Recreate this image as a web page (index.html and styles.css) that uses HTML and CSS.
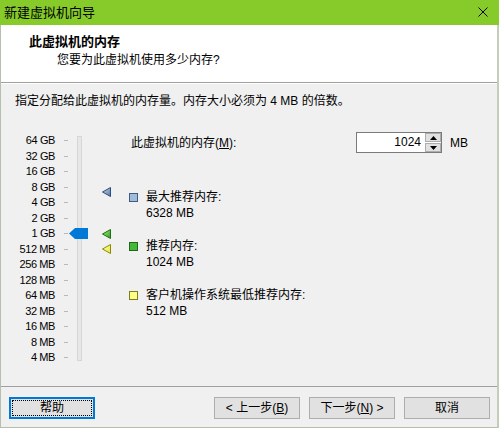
FILE: index.html
```html
<!DOCTYPE html>
<html lang="zh-CN">
<head>
<meta charset="utf-8">
<link rel="stylesheet" href="styles.css">
</head>
<body>
<div class="window">
  <div class="titlebar">
    <span class="title">新建虚拟机向导</span>
    <svg class="close" width="10" height="10" viewBox="0 0 10 10"><path d="M0.5 0.5 L9.5 9.5 M9.5 0.5 L0.5 9.5" stroke="#000" stroke-width="1" fill="none"/></svg>
  </div>
  <div class="frame">
    <div class="header">
      <div class="h-title">此虚拟机的内存</div>
      <div class="h-sub">您要为此虚拟机使用多少内存?</div>
    </div>
    <div class="content">
      <div class="intro">指定分配给此虚拟机的内存量。内存大小必须为 4 MB 的倍数。</div>
      <div class="main">
        <div class="slider">
          <div class="track"></div>
          <div class="lbl"><span>64 GB</span><i></i></div>
          <div class="lbl"><span>32 GB</span><i></i></div>
          <div class="lbl"><span>16 GB</span><i></i></div>
          <div class="lbl"><span>8 GB</span><i></i></div>
          <div class="lbl"><span>4 GB</span><i></i></div>
          <div class="lbl"><span>2 GB</span><i></i></div>
          <div class="lbl"><span>1 GB</span><i></i></div>
          <div class="lbl"><span>512 MB</span><i></i></div>
          <div class="lbl"><span>256 MB</span><i></i></div>
          <div class="lbl"><span>128 MB</span><i></i></div>
          <div class="lbl"><span>64 MB</span><i></i></div>
          <div class="lbl"><span>32 MB</span><i></i></div>
          <div class="lbl"><span>16 MB</span><i></i></div>
          <div class="lbl"><span>8 MB</span><i></i></div>
          <div class="lbl"><span>4 MB</span><i></i></div>
          <svg class="thumb" width="19" height="11" viewBox="0 0 19 11"><polygon points="0,5.5 6,0 19,0 19,11 6,11" fill="#0078d7"/></svg>
          <svg class="mark mark-blue" width="10" height="10" viewBox="0 0 10 10">
            <defs><linearGradient id="gb" x1="0" y1="0" x2="1" y2="1"><stop offset="0" stop-color="#c9d8ee"/><stop offset="1" stop-color="#5577a8"/></linearGradient></defs>
            <polygon points="0.5,5 8.5,0.5 8.5,9.5" fill="url(#gb)" stroke="#2d4c78" stroke-width="1" stroke-linejoin="round"/>
          </svg>
          <svg class="mark mark-green" width="10" height="10" viewBox="0 0 10 10">
            <defs><linearGradient id="gg" x1="0" y1="0" x2="1" y2="1"><stop offset="0" stop-color="#a8f08a"/><stop offset="1" stop-color="#2f9a1c"/></linearGradient></defs>
            <polygon points="0.5,5 8.5,0.5 8.5,9.5" fill="url(#gg)" stroke="#1e6e10" stroke-width="1" stroke-linejoin="round"/>
          </svg>
          <svg class="mark mark-yellow" width="10" height="10" viewBox="0 0 10 10">
            <defs><linearGradient id="gy" x1="0" y1="0" x2="1" y2="1"><stop offset="0" stop-color="#ffffc0"/><stop offset="1" stop-color="#e8e830"/></linearGradient></defs>
            <polygon points="0.5,5 8.5,0.5 8.5,9.5" fill="url(#gy)" stroke="#8a8a00" stroke-width="1" stroke-linejoin="round"/>
          </svg>
        </div>
        <div class="right">
          <div class="mem-row">
            <span class="mem-label">此虚拟机的内存(<u>M</u>):</span>
            <div class="spin-input">
              <div class="field">1024</div>
              <div class="spin">
                <div class="spin-btn"><svg width="7" height="4" viewBox="0 0 7 4"><polygon points="3.5,0 7,4 0,4" fill="#000"/></svg></div>
                <div class="spin-btn"><svg width="7" height="4" viewBox="0 0 7 4"><polygon points="0,0 7,0 3.5,4" fill="#000"/></svg></div>
              </div>
            </div>
            <span class="unit">MB</span>
          </div>
          <div class="legend first">
            <span class="sq sq-blue"></span>
            <div class="leg-text"><div>最大推荐内存:</div><div>6328 MB</div></div>
          </div>
          <div class="legend">
            <span class="sq sq-green"></span>
            <div class="leg-text"><div>推荐内存:</div><div>1024 MB</div></div>
          </div>
          <div class="legend">
            <span class="sq sq-yellow"></span>
            <div class="leg-text"><div>客户机操作系统最低推荐内存:</div><div>512 MB</div></div>
          </div>
        </div>
      </div>
    </div>
    <div class="footer">
      <button class="btn btn-default"><span class="focus">帮助</span></button>
      <div class="spacer"></div>
      <button class="btn">&lt; 上一步(<u>B</u>)</button>
      <button class="btn">下一步(<u>N</u>) &gt;</button>
      <button class="btn">取消</button>
    </div>
  </div>
</div>
</body>
</html>
```
FILE: styles.css
```css
* { box-sizing: border-box; }
html, body { margin: 0; padding: 0; }
body {
  width: 499px;
  height: 428px;
  overflow: hidden;
  font-family: "Liberation Sans", "Noto Sans CJK SC", sans-serif;
  font-size: 12px;
  color: #000;
  background: #f0f0f0;
}
.window {
  width: 499px;
  height: 428px;
  display: flex;
  flex-direction: column;
}
.titlebar {
  height: 25px;
  flex: none;
  background: #86cb2a;
  display: flex;
  align-items: center;
  padding: 0 11px 0 4px;
}
.title {
  font-size: 13px;
  line-height: 16px;
  flex: 1;
}
.close { display: block; margin-top: -1px; }
.frame {
  flex: 1;
  display: flex;
  flex-direction: column;
  border: 1px solid #b6bfab;
  border-top: none;
  border-right: 2px solid #c4ccba;
}
.header {
  height: 58px;
  flex: none;
  background: #fff;
  padding: 9px 0 0 28px;
  border-bottom: 1px solid #a0a0a0;
}
.h-title {
  font-size: 13px;
  font-weight: bold;
  line-height: 16px;
}
.h-sub {
  margin-top: 2px;
  padding-left: 28px;
  line-height: 16px;
}
.content {
  flex: 1;
  border-top: 1px solid #fff;
  padding-top: 9px;
}
.intro {
  padding-left: 14px;
  line-height: 16px;
}
.main {
  display: flex;
  align-items: flex-start;
  margin-top: 24px;
}
.slider {
  position: relative;
  width: 130px;
  flex: none;
}
.lbl {
  display: flex;
  align-items: center;
  height: 15.5px;
}
.lbl span {
  width: 54px;
  text-align: right;
  font-size: 11px;
  letter-spacing: -0.4px;
  line-height: 15.5px;
  white-space: nowrap;
}
.lbl i {
  display: block;
  width: 4px;
  height: 1px;
  margin-left: 9px;
  background: #b8b8b8;
}
.track {
  position: absolute;
  left: 76px;
  top: 3px;
  width: 5px;
  height: 225px;
  background: #e7e7e7;
  border: 1px solid #d6d6d6;
}
.thumb {
  position: absolute;
  left: 68px;
  top: 95px;
  display: block;
}
.mark { position: absolute; left: 101px; display: block; }
.mark-blue { top: 54px; }
.mark-green { top: 96px; }
.mark-yellow { top: 111px; }
.right {
  flex: 1;
  margin-top: -1px;
}
.mem-row {
  display: flex;
  align-items: center;
  height: 21px;
}
.mem-label {
  width: 225px;
  line-height: 16px;
}
.mem-label u, .btn u { text-decoration: underline; text-underline-offset: 1px; }
.spin-input {
  display: flex;
  width: 86px;
  height: 21px;
  border: 1px solid #7a7a7a;
  background: #fff;
}
.field {
  flex: 1;
  text-align: right;
  padding-right: 3px;
  line-height: 19px;
}
.spin {
  width: 17px;
  display: flex;
  flex-direction: column;
  gap: 1px;
  padding: 0 0 0 1px;
  background: #fff;
}
.spin-btn {
  flex: 1;
  background: #e1e1e1;
  border: 1px solid #adadad;
  display: flex;
  align-items: center;
  justify-content: center;
}
.spin-btn svg { display: block; }
.unit {
  margin-left: 8px;
  line-height: 16px;
}
.legend {
  display: flex;
  align-items: flex-start;
  margin-left: -2px;
  margin-top: 17px;
}
.legend.first { margin-top: 36px; }
.sq {
  width: 9px;
  height: 9px;
  flex: none;
  margin-top: 4px;
  border: 1px solid;
}
.sq-blue { background: #a3bad9; border-color: #3d5c86; }
.sq-green { background: #45b83a; border-color: #1c6a14; }
.sq-yellow { background: #ffff88; border-color: #7d7d20; }
.leg-text {
  margin-left: 8px;
  line-height: 16px;
}
.footer {
  height: 41px;
  flex: none;
  border-top: 1px solid #a0a0a0;
  display: flex;
  align-items: flex-start;
  padding: 10px 7px 0 8px;
  gap: 9px;
}
.footer .spacer { flex: 1; }
.btn {
  width: 86px;
  height: 22px;
  margin: 0;
  padding: 0;
  font-family: inherit;
  font-size: 12px;
  color: #000;
  background: #e1e1e1;
  border: 1px solid #adadad;
  line-height: 18px;
}
.btn-default {
  border: 2px solid #0078d7;
  padding: 1px;
}
.btn-default .focus {
  display: block;
  height: 16px;
  line-height: 14px;
  border: 1px dotted #000;
}
```
